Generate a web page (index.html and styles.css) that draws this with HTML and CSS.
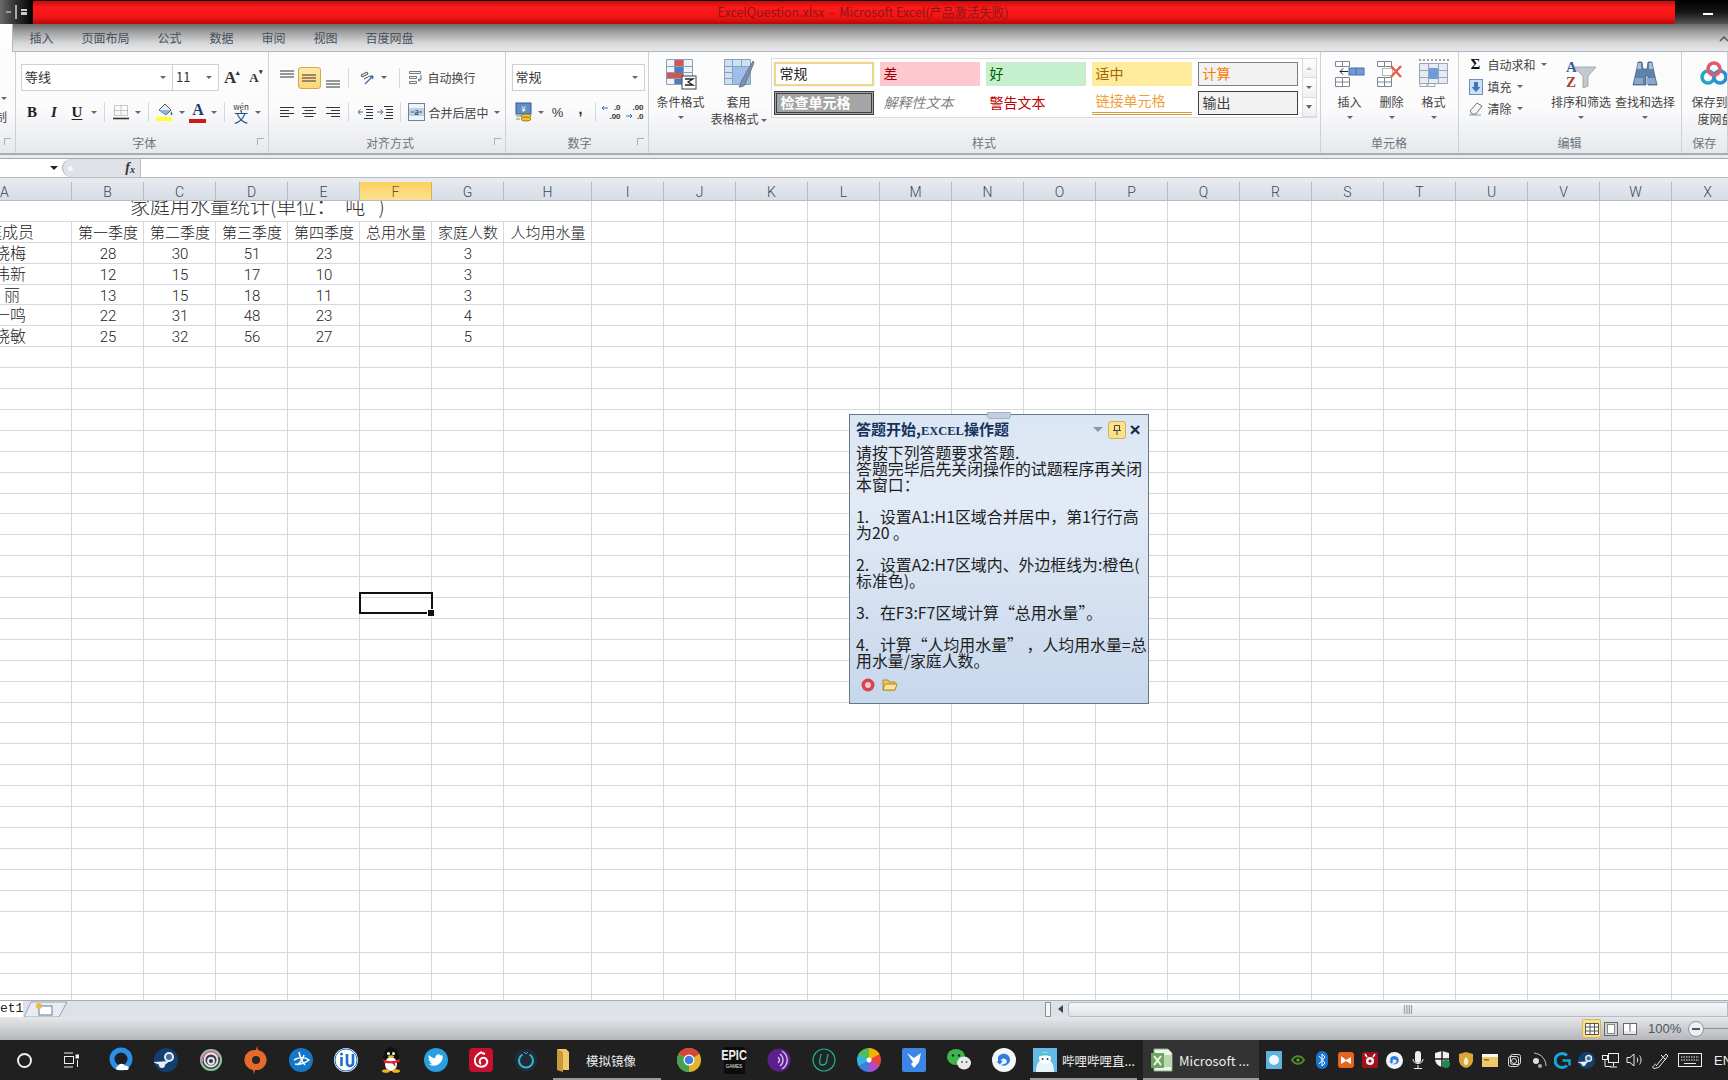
FILE: index.html
```html
<!DOCTYPE html>
<html lang="zh-CN">
<head>
    <meta charset="UTF-8">
    <title>ExcelQuestion.xlsx - Microsoft Excel</title>
    <link rel="stylesheet" href="styles.css">
</head>
<body>
    <svg class="defs">
        <symbol id="lines-left" viewBox="0 0 14 12"><path d="M0 1.500h14M0 4.500h9M0 7.500h14M0 10.500h9" stroke="#333" fill="none"/></symbol>
        <symbol id="lines-center" viewBox="0 0 14 12"><path d="M0 1.500h14M2.500 4.500h9M0 7.500h14M2.500 10.500h9" stroke="#333" fill="none"/></symbol>
        <symbol id="lines-right" viewBox="0 0 14 12"><path d="M0 1.500h14M5 4.500h9M0 7.500h14M5 10.500h9" stroke="#333" fill="none"/></symbol>
        <symbol id="three" viewBox="0 0 14 8"><path d="M0 1h14M0 4h14M0 7h14" stroke="#333" fill="none"/></symbol>
    </svg>

    <header class="titlebar">
        <div class="quick"><span class="quick-dot"></span><span class="quick-bar"></span><span class="quick-more"></span></div>
        <div class="title-red">ExcelQuestion.xlsx&nbsp; -&nbsp; Microsoft Excel(产品激活失败)</div>
        <div class="window-btns"><span class="min-dash"></span></div>
    </header>

    <nav class="tabs">
        <div class="tab-active"></div>
        <span>插入</span><span>页面布局</span><span>公式</span><span>数据</span><span>审阅</span><span>视图</span><span>百度网盘</span>
        <svg class="ribbon-toggle" width="10" height="8" viewBox="0 0 10 8"><path d="M1 6l4-4 4 4" stroke="#555" stroke-width="1.500" fill="none"/></svg>
    </nav>

    <section class="ribbon">
        <div class="group g-clip">
            <div class="body">
                <span class="arr clip-arr"></span>
                <span class="clip-text">制</span>
            </div>
            <div class="label"><i class="launcher"></i></div>
        </div>

        <div class="group g-font">
            <div class="body">
                <div class="row row-top">
                    <div class="combo combo-font">等线<span class="arr"></span></div>
                    <div class="combo combo-size">11<span class="arr"></span></div>
                    <span class="grow-a">A<sup>▴</sup></span>
                    <span class="shrink-a">A<sup>▾</sup></span>
                </div>
                <div class="row row-bottom">
                    <span class="ico w22 bold">B</span>
                    <span class="ico w22 ital">I</span>
                    <span class="ico w24 under">U</span>
                    <span class="ico w10"><span class="arr"></span></span>
                    <span class="sep"></span>
                    <span class="ico w24">
                        <svg width="16" height="16" viewBox="0 0 16 16"><path d="M1.500 1.500h13v10h-13zM8 1.500v10M1.500 6.500h13" stroke="#999" stroke-dasharray="1 1" fill="none"/><path d="M0 14.500h16" stroke="#333" stroke-width="1.600"/></svg>
                    </span>
                    <span class="ico w10"><span class="arr"></span></span>
                    <span class="sep"></span>
                    <span class="ico w24">
                        <svg width="18" height="20" viewBox="0 0 18 20"><path d="M3 8l6-6 6 6-5 5z" fill="#e8eef5" stroke="#555"/><path d="M3 8h11l-4 5z" fill="#8fb4dc"/><path d="M15 9c1.400 2 2 3 1 4s-2-1-1-4z" fill="#3c6fa8"/><rect y="15" width="16" height="4" fill="#ffff33"/></svg>
                    </span>
                    <span class="ico w10"><span class="arr"></span></span>
                    <span class="ico w22 color-a">A<i></i></span>
                    <span class="ico w10"><span class="arr"></span></span>
                    <span class="sep"></span>
                    <span class="ico w24 wen"><small>wén</small>文</span>
                    <span class="ico w10"><span class="arr"></span></span>
                </div>
            </div>
            <div class="label">字体<i class="launcher"></i></div>
        </div>

        <div class="group g-align">
            <div class="body">
                <div class="row row-top row-align">
                    <span class="ico w22 top"><svg width="14" height="8"><use href="#three"/></svg></span>
                    <span class="ico w23 on"><svg width="14" height="8"><use href="#three"/></svg></span>
                    <span class="ico w24 low"><svg width="14" height="8"><use href="#three"/></svg></span>
                    <span class="sep"></span>
                    <span class="ico w24 ml3">
                        <svg width="16" height="16" viewBox="0 0 16 16"><path d="M2 5l6-3 1 2-6 3zM5 9l6-3" stroke="#555" fill="#dfe6ef"/><path d="M6 14L14 6M14 6l-3 .5M14 6l-.5 3" stroke="#3c6fa8" stroke-width="1.300" fill="none"/></svg>
                    </span>
                    <span class="ico w10"><span class="arr"></span></span>
                    <span class="wide-gap"></span>
                    <span class="sep"></span>
                    <span class="ico w20 ml3">
                        <svg width="16" height="16" viewBox="0 0 16 16"><path d="M1.500 1.500h11v2h-11zM1.500 6.500h7v2h-7zM1.500 11.500h7v2h-7z" fill="#f4f6f8" stroke="#777"/><path d="M13 5v5h-3m1.500-1.500L10 10l1.500 1.500" stroke="#3c6fa8" fill="none"/></svg>
                    </span>
                    <span class="tool-text">自动换行</span>
                </div>
                <div class="row row-bottom row-align">
                    <span class="ico w22"><svg width="14" height="12"><use href="#lines-left"/></svg></span>
                    <span class="ico w23"><svg width="14" height="12"><use href="#lines-center"/></svg></span>
                    <span class="ico w24"><svg width="14" height="12"><use href="#lines-right"/></svg></span>
                    <span class="sep"></span>
                    <span class="ico w20 ml3">
                        <svg width="16" height="14" viewBox="0 0 16 14"><path d="M7 1.500h9M9 4.500h7M9 7.500h7M9 10.500h7M7 13.500h9" stroke="#333"/><path d="M1 7h5M1 7l2.500-2.500M1 7l2.500 2.500" stroke="#3c6fa8" fill="none"/></svg>
                    </span>
                    <span class="ico w20">
                        <svg width="16" height="14" viewBox="0 0 16 14"><path d="M7 1.500h9M9 4.500h7M9 7.500h7M9 10.500h7M7 13.500h9" stroke="#333"/><path d="M0 7h6M6 7L3.500 4.500M6 7L3.500 9.500" stroke="#3c6fa8" fill="none"/></svg>
                    </span>
                    <span class="wide-gap2"></span>
                    <span class="sep"></span>
                    <span class="ico w20 ml3">
                        <svg width="17" height="18" viewBox="0 0 17 18"><rect x=".5" y=".5" width="16" height="17" fill="#f0f4f8" stroke="#6f8396"/><rect x="1" y="5" width="15" height="8" fill="#bcd2ea"/><path d="M3 9h3m5 0h3" stroke="#2a5a90"/><text x="8.500" y="12" font-size="8" text-anchor="middle" fill="#123">a</text></svg>
                    </span>
                    <span class="tool-text">合并后居中</span>
                    <span class="arr arr-text"></span>
                </div>
            </div>
            <div class="label">对齐方式<i class="launcher"></i></div>
        </div>

        <div class="group g-num">
            <div class="body">
                <div class="row row-top">
                    <div class="combo combo-num">常规<span class="arr"></span></div>
                </div>
                <div class="row row-bottom">
                    <span class="ico w24">
                        <svg width="18" height="20" viewBox="0 0 18 20"><rect x="1" y="1" width="15" height="11" fill="#5f8fc9" stroke="#2c5a94"/><text x="8.500" y="10" font-size="8" fill="#fff" text-anchor="middle">¥</text><ellipse cx="11" cy="14" rx="5" ry="2" fill="#f0c33c" stroke="#a87b12"/><ellipse cx="11" cy="17" rx="5" ry="2" fill="#f0c33c" stroke="#a87b12"/><path d="M1 14h5M1 17h4" stroke="#6a9a3a"/></svg>
                    </span>
                    <span class="ico w10"><span class="arr"></span></span>
                    <span class="ico w24 pct">%</span>
                    <span class="ico w22 comma">,</span>
                    <span class="sep"></span>
                    <span class="ico w24 dec"><svg width="18" height="16" viewBox="0 0 18 16"><path d="M1 4h6M1 4l2-2M1 4l2 2" stroke="#3c6fa8" fill="none"/></svg><b>.0<br>.00</b></span>
                    <span class="ico w22 dec"><svg width="18" height="16" viewBox="0 0 18 16"><path d="M1 12h6M7 12l-2-2M7 12l-2 2" stroke="#3c6fa8" fill="none"/></svg><b>.00<br>.0</b></span>
                </div>
            </div>
            <div class="label">数字<i class="launcher"></i></div>
        </div>

        <div class="group g-styles">
            <div class="body styles-body">
                <div class="big-btn w58">
                    <svg width="32" height="32" viewBox="0 0 32 32"><path d="M1.500 1.500h26v25h-26zM1.500 8.500h26M1.500 14.500h26M1.500 20.500h26M9.500 1.500v25M18.500 1.500v25" fill="#eef3f9" stroke="#8aa0b8"/><rect x="10" y="2" width="8" height="6" fill="#d9534f"/><rect x="10" y="9" width="8" height="6" fill="#4a7cc0"/><rect x="2" y="15" width="16" height="5" fill="#d9534f"/><rect x="10" y="21" width="8" height="5" fill="#4a7cc0"/><rect x="17" y="18" width="14" height="13" fill="#fff" stroke="#444"/><path d="M20 21h8l-5 3 5 3h-8" fill="none" stroke="#222" stroke-width="1.300"/></svg>
                    <span>条件格式</span>
                    <span class="arr"></span>
                </div>
                <div class="big-btn w58">
                    <svg width="32" height="32" viewBox="0 0 32 32"><path d="M1.500 1.500h26v25h-26zM1.500 8.500h26M1.500 14.500h26M1.500 20.500h26M9.500 1.500v25M18.500 1.500v25" fill="#cfe0f5" stroke="#8aa0b8"/><rect x="10" y="9" width="17" height="17" fill="#9dbdea"/><path d="M30 3L19 22l-3 7c4 0 7-2 7-5l8-19z" fill="#7f8fa5" stroke="#56657a" stroke-width=".7"/></svg>
                    <span>套用</span>
                    <span>表格格式<i class="arr inline-arr"></i></span>
                </div>
                <div class="gallery">
                    <div class="style-grid">
                        <div class="st st-normal">常规</div>
                        <div class="st st-bad">差</div>
                        <div class="st st-good">好</div>
                        <div class="st st-mid">适中</div>
                        <div class="st st-calc">计算</div>
                        <div class="st st-check">检查单元格</div>
                        <div class="st st-note">解释性文本</div>
                        <div class="st st-warn">警告文本</div>
                        <div class="st st-link">链接单元格</div>
                        <div class="st st-out">输出</div>
                    </div>
                    <div class="gallery-scroll">
                        <span><i class="arr arr-up pale"></i></span>
                        <span><i class="arr"></i></span>
                        <span><i class="arr more"></i></span>
                    </div>
                </div>
            </div>
            <div class="label">样式</div>
        </div>

        <div class="group g-cells">
            <div class="body cells-body">
                <div class="big-btn w42">
                    <svg width="32" height="28" viewBox="0 0 32 28"><path d="M1.500 1.500h14v5h-14zM8.500 1.500v5M1.500 17.500h14v9h-14zM8.500 17.500v9M1.500 22h14" fill="#fff" stroke="#7b8794"/><rect x="15" y="8" width="15" height="7" fill="#6f9bd8" stroke="#47709f"/><path d="M22 8v7" stroke="#47709f"/><path d="M6 11.500h8M6 11.500l3-3M6 11.500l3 3" stroke="#222" fill="none"/></svg>
                    <span>插入</span>
                    <span class="arr"></span>
                </div>
                <div class="big-btn w42">
                    <svg width="32" height="28" viewBox="0 0 32 28"><path d="M1.500 1.500h14v5h-14zM8.500 1.500v5M1.500 17.500h14v9h-14zM8.500 17.500v9M1.500 22h14" fill="#fff" stroke="#7b8794"/><path d="M6.500 8.500h10v7h-10z" fill="#fff" stroke="#777" stroke-dasharray="1 1"/><path d="M15 6l10 11M25 6L15 17" stroke="#e0604c" stroke-width="2.400"/></svg>
                    <span>删除</span>
                    <span class="arr"></span>
                </div>
                <div class="big-btn w42">
                    <svg width="32" height="30" viewBox="0 0 32 30"><path d="M1 1h30" stroke="#444" stroke-dasharray="2 2"/><path d="M1.500 4.500h28v20h-28zM10.500 4.500v20M20.500 4.500v20M1.500 11.500h28M1.500 18.500h28" fill="#e5ecf5" stroke="#98a7b8"/><rect x="11" y="9" width="9" height="11" fill="#6f9bd8"/><path d="M2 24.500v3h7v-3M10 24.500v3h7v-3" fill="none" stroke="#98a7b8"/></svg>
                    <span>格式</span>
                    <span class="arr"></span>
                </div>
            </div>
            <div class="label">单元格</div>
        </div>

        <div class="group g-edit">
            <div class="body edit-body">
                <div class="edit-list">
                    <div class="edit-item"><span class="sigma">Σ</span><span>自动求和</span><span class="arr"></span></div>
                    <div class="edit-item">
                        <svg width="14" height="16" viewBox="0 0 14 16"><rect x=".5" y=".5" width="13" height="15" fill="#cddff3" stroke="#6e8eb5"/><path d="M5 3h4v5h2.500L7 13 2.500 8H5z" fill="#3f73bf"/></svg>
                        <span>填充</span><span class="arr"></span>
                    </div>
                    <div class="edit-item">
                        <svg width="14" height="14" viewBox="0 0 14 14"><path d="M1 9l7-8 5 3-6 8H3z" fill="#f4f6f8" stroke="#6b7785"/><path d="M0 13h12" stroke="#8797a8"/></svg>
                        <span>清除</span><span class="arr"></span>
                    </div>
                </div>
                <div class="big-btn w62">
                    <svg width="32" height="30" viewBox="0 0 32 30"><text x="1" y="13" class="az az-a">A</text><text x="1" y="28" class="az az-z">Z</text><path d="M9 8h22l-8 9v10l-5 2V17z" fill="#c3c9cf" stroke="#8a9299" stroke-width=".7"/></svg>
                    <span>排序和筛选</span>
                    <span class="arr"></span>
                </div>
                <div class="big-btn w62">
                    <svg width="30" height="28" viewBox="0 0 30 28"><path d="M8 2h4l1 7h4l1-7h4l2 10 3 13h-9v-9h-2v9H3L6 12z" fill="#5f82ad" stroke="#3a567a" stroke-width=".7"/><path d="M8 3h3v6H7zM19 3h3l1 6h-4z" fill="#a9bfd8"/><path d="M5 18h8v6H4zM17 18h8l1 6h-9z" fill="#8aa7c9"/></svg>
                    <span>查找和选择</span>
                    <span class="arr"></span>
                </div>
            </div>
            <div class="label">编辑</div>
        </div>

        <div class="group g-save">
            <div class="body save-body">
                <div class="big-btn w58">
                    <svg width="30" height="26" viewBox="0 0 30 26"><circle cx="9" cy="16" r="6" fill="none" stroke="#27a3c7" stroke-width="3.500"/><circle cx="21" cy="16" r="6" fill="none" stroke="#2b8fd6" stroke-width="3.500"/><circle cx="15" cy="8" r="6" fill="none" stroke="#e0596f" stroke-width="3.500"/></svg>
                    <span class="save-line">保存到百</span>
                    <span class="save-line">度网盘</span>
                </div>
            </div>
            <div class="label">保存</div>
        </div>
    </section>

    <div class="formula-wrap">
        <div class="formula">
            <div class="name-box"><span class="arr dark"></span></div>
            <div class="fx-cap"><span class="cap-mark"></span><span class="fx">f<sub>x</sub></span></div>
            <div class="fx-input"></div>
        </div>
    </div>

    <div class="col-heads">
        <span class="col-a">A</span><span>B</span><span>C</span><span>D</span><span>E</span><span class="col-on">F</span><span>G</span><span>H</span>
        <span>I</span><span>J</span><span>K</span><span>L</span><span>M</span><span>N</span><span>O</span><span>P</span>
        <span>Q</span><span>R</span><span>S</span><span>T</span><span>U</span><span>V</span><span>W</span><span>X</span>
    </div>

    <main class="sheet">
        <div class="row-title"><span>家庭用水量统计(单位：&nbsp;&nbsp;吨&nbsp;&nbsp;&nbsp;)</span></div>
        <div class="data-row"><span class="name">家庭成员</span><span>第一季度</span><span>第二季度</span><span>第三季度</span><span>第四季度</span><span>总用水量</span><span>家庭人数</span><span>人均用水量</span></div>
        <div class="data-row"><span class="name">李晓梅</span><span>28</span><span>30</span><span>51</span><span>23</span><span></span><span>3</span><span></span></div>
        <div class="data-row"><span class="name">张伟新</span><span>12</span><span>15</span><span>17</span><span>10</span><span></span><span>3</span><span></span></div>
        <div class="data-row"><span class="name">王&nbsp;丽</span><span>13</span><span>15</span><span>18</span><span>11</span><span></span><span>3</span><span></span></div>
        <div class="data-row"><span class="name">刘一鸣</span><span>22</span><span>31</span><span>48</span><span>23</span><span></span><span>4</span><span></span></div>
        <div class="data-row"><span class="name">陈晓敏</span><span>25</span><span>32</span><span>56</span><span>27</span><span></span><span>5</span><span></span></div>
        <div class="active-cell"></div>
    </main>

    <aside class="dialog">
        <div class="dialog-grip"></div>
        <div class="dialog-head">
            <h2>答题开始,<em>EXCEL</em>操作题</h2>
            <span class="arr head-arr"></span>
            <span class="pin"><svg width="10" height="12" viewBox="0 0 10 12"><path d="M2.500 1.500h5v5h-5zM1 6.500h8M5 6.500V11" stroke="#444" fill="none"/></svg></span>
            <span class="close">×</span>
        </div>
        <div class="dialog-text">
            <p>请按下列答题要求答题.<br>答题完毕后先关闭操作的试题程序再关闭<br>本窗口：</p>
            <p>1.&nbsp;&nbsp; 设置A1:H1区域合并居中，第1行行高<br>为20 。</p>
            <p>2.&nbsp;&nbsp; 设置A2:H7区域内、外边框线为:橙色(<br>标准色)。</p>
            <p>3.&nbsp;&nbsp; 在F3:F7区域计算“总用水量”。</p>
            <p>4.&nbsp;&nbsp; 计算“人均用水量”&nbsp;，人均用水量=总<br>用水量/家庭人数。</p>
        </div>
        <div class="dialog-icons">
            <svg width="14" height="14" viewBox="0 0 14 14"><circle cx="7" cy="7" r="6.500" fill="#d9434f"/><circle cx="7" cy="7" r="3" fill="#f6c6ca"/></svg>
            <svg width="16" height="13" viewBox="0 0 16 13"><path d="M1 12V2h5l1 2h6v8z" fill="#f2c65a" stroke="#b58a2a"/><path d="M1 12l2-6h12l-2 6z" fill="#fbe39a" stroke="#b58a2a"/></svg>
        </div>
    </aside>

    <div class="sheet-tabs">
        <span class="sheet-name">et1</span>
        <span class="new-sheet">
            <svg width="44" height="16" viewBox="0 0 44 16"><path d="M0 16L7 1h36l-8 15z" fill="#e8ecf2" stroke="#9aa3ae"/><rect x="15" y="5" width="13" height="9" fill="#fff" stroke="#5a7a9a"/><circle cx="15" cy="5" r="3" fill="#e9b949"/></svg>
        </span>
        <span class="split"></span>
        <span class="scroll-left"></span>
        <div class="scroll-thumb"><span>||||</span></div>
    </div>

    <div class="status">
        <span class="view view-on">
            <svg width="14" height="12" viewBox="0 0 14 12"><path d="M.5.500h13v11H.500zM.5 4h13M.5 8h13M5 .5v11M9.500.5v11" stroke="#555" fill="#fff"/></svg>
        </span>
        <span class="view">
            <svg width="14" height="14" viewBox="0 0 14 14"><rect x=".5" y=".5" width="13" height="13" fill="#cfd3d8" stroke="#666"/><rect x="3.500" y="2.500" width="7" height="9" fill="#fff" stroke="#888"/></svg>
        </span>
        <span class="view">
            <svg width="14" height="12" viewBox="0 0 14 12"><rect x=".5" y=".5" width="13" height="11" fill="#e6e8eb" stroke="#666"/><rect x="1" y="1" width="5.500" height="7" fill="#fff"/><rect x="7.500" y="1" width="5.500" height="7" fill="#fff"/><path d="M7 .5v8" stroke="#666"/></svg>
        </span>
        <span class="zoom-text">100%</span>
        <span class="zoom-minus"><i></i></span>
        <span class="zoom-track"></span>
    </div>

    <footer class="taskbar">
        <span class="slot w48"><i class="search-ring"></i></span>
        <span class="slot w46">
            <svg width="16" height="16" viewBox="0 0 16 16" fill="none" stroke="#eee"><path d="M1 1h9M1 15h9"/><rect x="1.500" y="4.500" width="9" height="7"/><rect x="13" y="3" width="2.500" height="3" fill="#eee"/><path d="M14.500 8v7"/></svg>
        </span>
        <span class="slot-run">
            <span class="slot">
                <svg width="24" height="26" viewBox="0 0 24 26"><circle cx="12" cy="12" r="9" fill="#1c1f24" stroke="#2a8fe8" stroke-width="5"/><path d="M9 23c-2 0-3-3 0-4 1-3 6-3 7 0 4-1 5 4 2 4z" fill="#fff"/></svg>
            </span>
            <span class="slot">
                <svg width="24" height="24" viewBox="0 0 24 24"><circle cx="12" cy="12" r="12" fill="#123f6e"/><path d="M0 14l9 4 6-5" fill="#e8eef5" stroke="#e8eef5"/><circle cx="15" cy="9" r="5" fill="#e8eef5"/><circle cx="15" cy="9" r="3" fill="#3a6f9e"/><circle cx="8" cy="17" r="3" fill="#e8eef5"/></svg>
            </span>
            <span class="slot">
                <svg width="24" height="24" viewBox="0 0 24 24" fill="none"><circle cx="12" cy="12" r="11" fill="#3a3a44"/><circle cx="12" cy="12" r="10" stroke="#8cc9a0" stroke-width="2"/><path d="M3 14a9 9 0 0 1 17-5" stroke="#e06bb0" stroke-width="2"/><circle cx="12" cy="12" r="6.500" stroke="#e8e8f0" stroke-width="1.800"/><circle cx="12" cy="13" r="3" stroke="#e8e8f0" stroke-width="1.800"/></svg>
            </span>
            <span class="slot">
                <svg width="24" height="28" viewBox="0 0 24 28"><path d="M13 0l1 4a10 10 0 0 1-3 20l-1 4-1-4a10 10 0 0 1 3-20z" fill="#e56a2c"/><circle cx="12" cy="14" r="4" fill="#26262a"/></svg>
            </span>
            <span class="slot">
                <svg width="24" height="24" viewBox="0 0 24 24"><circle cx="12" cy="12" r="12" fill="#1676c8"/><path d="M10 4c1 5 3 10 6 13M5 12c5-3 11-3 15 0-4 3-9 5-14 4M15 7c-1 4-4 8-7 10" stroke="#fff" stroke-width="1.500" fill="none"/></svg>
            </span>
            <span class="slot">
                <svg width="24" height="24" viewBox="0 0 24 24"><circle cx="12" cy="12" r="12" fill="#fff"/><circle cx="12" cy="12" r="11" fill="none" stroke="#1f6fd0" stroke-width="1"/><path d="M7.500 9v9M13 6v9a3 3 0 0 0 6 0V6" fill="none" stroke="#1f6fd0" stroke-width="2.600"/><circle cx="7.500" cy="6" r="1.500" fill="#1f6fd0"/></svg>
            </span>
            <span class="slot">
                <svg width="20" height="26" viewBox="0 0 20 26"><ellipse cx="10" cy="11" rx="8" ry="11" fill="#111"/><ellipse cx="10" cy="17" rx="6" ry="7" fill="#fff"/><circle cx="7.500" cy="6.500" r="1.500" fill="#fff"/><circle cx="12.500" cy="6.500" r="1.500" fill="#fff"/><ellipse cx="10" cy="9.500" rx="3" ry="1.300" fill="#f5b21a"/><path d="M2 12c5 3 11 3 16 0l1 3-5 1 .5 4-3-3.500L3 16z" fill="#d8262a"/><ellipse cx="5" cy="24" rx="4" ry="1.800" fill="#f5b21a"/><ellipse cx="15" cy="24" rx="4" ry="1.800" fill="#f5b21a"/></svg>
            </span>
            <span class="slot">
                <svg width="24" height="24" viewBox="0 0 24 24"><circle cx="12" cy="12" r="12" fill="#2a9fe2"/><path d="M19 7.800c-.6.300-1.200.4-1.800.5.600-.4 1.100-1 1.400-1.700-.6.400-1.300.6-2 .8a3.100 3.100 0 0 0-5.300 2.800c-2.600-.1-4.900-1.400-6.400-3.300-.8 1.400-.4 3.200 1 4.100-.5 0-1-.2-1.400-.4 0 1.500 1.100 2.800 2.500 3.100-.5.100-.9.100-1.400 0 .4 1.200 1.500 2.100 2.900 2.200A6.300 6.300 0 0 1 5 16.200a8.900 8.900 0 0 0 13.700-7.900c.1-.1.300-.3.300-.5z" fill="#fff"/></svg>
            </span>
            <span class="slot">
                <svg width="24" height="24" viewBox="0 0 24 24"><rect width="24" height="24" rx="4" fill="#c8102e"/><path d="M13 4c-5 2-8 6-7 10 1 5 8 6 11 3 3-4 0-8-4-7-3 1-3 5-1 6M13 5l3 1" stroke="#fff" stroke-width="2" fill="none"/></svg>
            </span>
            <span class="slot">
                <svg width="24" height="24" viewBox="0 0 24 24" fill="none"><circle cx="12" cy="12" r="11.500" fill="#1f2c38"/><path d="M8.500 6.500a7 7 0 1 0 7 0" stroke="#38b6c6" stroke-width="2"/><path d="M10 4l2 2 2-2" stroke="#38b6c6"/></svg>
            </span>
        </span>
        <span class="run-item run-folder">
            <svg width="14" height="24" viewBox="0 0 14 24"><path d="M1 1h9l3 3v18H1z" fill="#f0c869"/><path d="M1 22V1l6 3v20z" fill="#c99a3a"/></svg>
            <span class="run-label">模拟镜像</span>
        </span>
        <span class="slot-run slot-run2">
            <span class="slot">
                <svg width="24" height="24" viewBox="0 0 24 24"><circle cx="12" cy="12" r="12" fill="#e0b42c"/><path d="M12 12L1.600 6A12 12 0 0 1 22.400 6z" fill="#d6453a"/><path d="M12 12L1.600 6A12 12 0 0 0 12 24z" fill="#46a04f"/><circle cx="12" cy="12" r="5.500" fill="#fff"/><circle cx="12" cy="12" r="4.300" fill="#3f7fe0"/></svg>
            </span>
            <span class="slot epic">
                <span class="epic-big">EPIC</span>
                <span class="epic-small">GAMES</span>
            </span>
            <span class="slot">
                <svg width="24" height="24" viewBox="0 0 24 24" fill="none"><circle cx="12" cy="12" r="11.500" fill="#5a1f8a"/><path d="M13 6c4 3 4 9 0 12M15 3c7 5 7 13 0 18M11 9c2 2 2 4 0 6" stroke="#d9b5f5" stroke-width="1.500"/></svg>
            </span>
            <span class="slot">
                <svg width="24" height="24" viewBox="0 0 24 24" fill="none"><circle cx="12" cy="12" r="11" fill="#1d2624" stroke="#2aa58c" stroke-width="1.200"/><path d="M9 6l-1.500 8c0 4 6 4 7 0L16 6" stroke="#2aa58c" stroke-width="1.300"/></svg>
            </span>
            <span class="slot"><i class="pinwheel"></i></span>
            <span class="slot">
                <svg width="24" height="24" viewBox="0 0 24 24"><rect width="24" height="24" rx="2" fill="#3d86e8"/><path d="M5 5l7 5 7-5-2 9-5 6-3-4 2-2z" fill="#fff"/></svg>
            </span>
            <span class="slot">
                <svg width="24" height="22" viewBox="0 0 24 22"><ellipse cx="9" cy="8" rx="9" ry="8" fill="#3cb54a"/><ellipse cx="17" cy="14" rx="7" ry="6.500" fill="#e9e9e9"/><circle cx="6" cy="6.500" r="1.200" fill="#124"/><circle cx="12" cy="6.500" r="1.200" fill="#124"/><circle cx="15" cy="13" r=".9" fill="#555"/><circle cx="19.500" cy="13" r=".9" fill="#555"/></svg>
            </span>
            <span class="slot">
                <svg width="24" height="24" viewBox="0 0 24 24"><circle cx="12" cy="12" r="12" fill="#f4f6fa"/><path d="M6 9c3-5 11-4 12 2 .6 5-5 8-9 6l3-1c3 0 4-4 1-5-2-1-4 0-4 2l2-.5-3 4-4-3 2 .2z" fill="#2e7de0"/></svg>
            </span>
        </span>
        <span class="run-item run-bili">
            <svg width="24" height="24" viewBox="0 0 24 24"><rect width="24" height="24" fill="#66b8e8"/><path d="M3 24c0-8 3-13 9-13s9 5 9 13z" fill="#e8f4fb"/><circle cx="12" cy="10" r="6" fill="#fff"/><path d="M5 9c0-6 14-6 14 0-3-2-11-2-14 0z" fill="#4fc3c9"/><circle cx="9.500" cy="11" r="1" fill="#246"/><circle cx="14.500" cy="11" r="1" fill="#246"/></svg>
            <span class="run-label">哔哩哔哩直...</span>
        </span>
        <span class="run-item run-excel">
            <svg width="22" height="24" viewBox="0 0 22 24"><path d="M3 1h14l4 4v18H3z" fill="#eef5ea" stroke="#8fae86"/><rect x="11" y="7" width="9" height="12" fill="#b9d8ac"/><rect y="5" width="13" height="15" fill="#6ea55f"/><path d="M3 8l7 9M10 8l-7 9" stroke="#f4f8f0" stroke-width="2"/></svg>
            <span class="run-label">Microsoft ...</span>
        </span>
        <span class="tray">
            <span class="tray-slot"><svg width="16" height="18" viewBox="0 0 16 18"><rect width="16" height="18" fill="#5fb3df"/><circle cx="8" cy="9" r="5" fill="#eef7fc"/></svg></span>
            <span class="tray-slot"><svg width="14" height="10" viewBox="0 0 14 10"><path d="M1 5c3-5 9-5 12 0-3 5-9 5-12 0z" fill="none" stroke="#4c8a2a" stroke-width="2"/><circle cx="7" cy="5" r="1.500" fill="#76b900"/></svg></span>
            <span class="tray-slot"><svg width="12" height="18" viewBox="0 0 12 18"><rect width="12" height="18" rx="6" fill="#1976d2"/><path d="M3 5l6 7-3 3V3l3 3-6 7" stroke="#fff" fill="none"/></svg></span>
            <span class="tray-slot"><svg width="16" height="16" viewBox="0 0 16 16"><rect width="16" height="16" rx="3" fill="#e8641e"/><path d="M3 4l5 4 5-3v7l-5-3-5 3z" fill="#fff"/></svg></span>
            <span class="tray-slot"><svg width="16" height="16" viewBox="0 0 16 16"><rect width="16" height="16" rx="2" fill="#a3121c"/><circle cx="8" cy="9" r="4" fill="#f2f2f2"/><circle cx="8" cy="9" r="1.600" fill="#a3121c"/><path d="M3 2l2 3M13 2l-2 3" stroke="#fff" stroke-width="1.500"/></svg></span>
            <span class="tray-slot"><svg width="17" height="17" viewBox="0 0 24 24"><circle cx="12" cy="12" r="12" fill="#f4f6fa"/><path d="M6 9c3-5 11-4 12 2 .6 5-5 8-9 6l3-1c3 0 4-4 1-5-2-1-4 0-4 2l2-.5-3 4-4-3 2 .2z" fill="#2e7de0"/></svg></span>
            <span class="tray-slot"><svg width="12" height="18" viewBox="0 0 12 18"><rect x="3" y="0" width="6" height="12" rx="3" fill="#eee"/><path d="M1 8c0 6 10 6 10 0M6 14v3M2 17.500h8" stroke="#eee" fill="none"/></svg></span>
            <span class="tray-slot"><svg width="16" height="18" viewBox="0 0 16 18"><path d="M8 0l7 2v6c0 4-3 7-7 8-4-1-7-4-7-8V2z" fill="#f2f2f2"/><path d="M1 8h14M8 0v16" stroke="#222" stroke-width="1.500"/><circle cx="12" cy="13" r="4" fill="#1e8a4b"/></svg></span>
            <span class="tray-slot"><svg width="14" height="16" viewBox="0 0 14 16"><path d="M7 0l7 2v6c0 4-3 7-7 8-4-1-7-4-7-8V2z" fill="#d9a536"/><path d="M7 5c3 3 3 8 0 8s-3-5 0-8z" fill="#f5ecd0"/></svg></span>
            <span class="tray-slot"><svg width="16" height="13" viewBox="0 0 16 13"><rect width="16" height="13" fill="#f0c869"/><rect width="16" height="3" fill="#f5f5f5"/><rect x="2" y="5" width="5" height="1.500" fill="#8a6a20"/></svg></span>
            <span class="tray-slot"><svg width="15" height="15" viewBox="0 0 15 15" fill="none" stroke="#ddd"><rect x="3.500" y="1.500" width="10" height="10" rx="2"/><rect x="1.500" y="3.500" width="10" height="10" rx="2"/><circle cx="7" cy="8" r="2.500"/></svg></span>
            <span class="tray-slot"><svg width="17" height="17" viewBox="0 0 17 17" fill="none"><path d="M4 1c8 1 12 7 12 13" stroke="#ccc"/><circle cx="6" cy="9" r="3" fill="#ddd"/><circle cx="10" cy="14" r="2" fill="#aaa"/></svg></span>
            <span class="tray-slot"><svg width="17" height="17" viewBox="0 0 17 17" fill="none"><path d="M13 3.500A7 7 0 1 0 13 13.500" stroke="#18a4dc" stroke-width="3"/><path d="M8.500 8.500h7v5" stroke="#18a4dc" stroke-width="2.400"/></svg></span>
            <span class="tray-slot"><svg width="17" height="17" viewBox="0 0 24 24"><circle cx="12" cy="12" r="12" fill="#123f6e"/><path d="M0 14l9 4 6-5" fill="#e8eef5" stroke="#e8eef5"/><circle cx="15" cy="9" r="5" fill="#e8eef5"/><circle cx="15" cy="9" r="3" fill="#3a6f9e"/><circle cx="8" cy="17" r="3" fill="#e8eef5"/></svg></span>
            <span class="tray-slot"><svg width="17" height="15" viewBox="0 0 17 15" fill="none" stroke="#eee"><rect x="6.500" y=".5" width="10" height="9"/><rect x=".5" y="2.500" width="5" height="4"/><path d="M3 6.500v7h6M11.500 9.500v4M8 14h7"/></svg></span>
            <span class="tray-slot"><svg width="17" height="14" viewBox="0 0 17 14" fill="none" stroke="#eee"><path d="M1 4.500h3L8 1v12L4 9.500H1z"/><path d="M11 4.500c1 1.500 1 3.500 0 5M13.500 2.500c2 2.500 2 6.500 0 9"/></svg></span>
            <span class="tray-wide w22">
                <svg width="18" height="18" viewBox="0 0 18 18" fill="none" stroke="#eee"><path d="M4 15L14 3l2 2-9 11c-2 1-5 2-6 1s1-3 3-4"/><path d="M9 4l5 5"/></svg>
            </span>
            <span class="tray-wide w36">
                <svg width="24" height="14" viewBox="0 0 24 14" fill="none" stroke="#eee"><rect x=".5" y=".5" width="23" height="13"/><path d="M3 4h18M3 7h18" stroke-dasharray="1.500 1"/><path d="M6 10.500h12"/></svg>
            </span>
            <span class="en">EN</span>
        </span>
    </footer>
</body>
</html>
```

FILE: styles.css
```css
* {
    box-sizing: border-box;
}
html, body {
    margin: 0;
    height: 100%;
}
body {
    width: 1728px;
    height: 1080px;
    overflow: hidden;
    position: relative;
    display: flex;
    flex-direction: column;
    font-family: "Noto Sans CJK SC", "Liberation Sans", sans-serif;
    font-size: 12px;
    color: #444;
    background-color: #fff;
}
.defs {
    display: none;
}
.arr {
    display: inline-block;
    width: 0;
    height: 0;
    border-left: 3px solid transparent;
    border-right: 3px solid transparent;
    border-top: 3px solid #666;
    flex: none;
}
.arr.dark {
    border-top-color: #222;
    border-left-width: 4px;
    border-right-width: 4px;
    border-top-width: 4px;
}
.arr-up {
    border-top: none;
    border-bottom: 3px solid #666;
}
.pale {
    opacity: 0.4;
}

/* title bar */
.titlebar {
    height: 24px;
    flex: none;
    display: flex;
    background: linear-gradient(#000 0, #151515 50%, #555 100%);
}
.quick {
    width: 33px;
    display: flex;
    align-items: center;
    gap: 4px;
    padding-left: 6px;
    background: linear-gradient(90deg, #6b6b6b 0, #333 45%, #000 100%);
}
.quick-dot {
    width: 5px;
    height: 2px;
    background-color: #999;
}
.quick-bar {
    width: 2px;
    height: 14px;
    background-color: #aaa;
}
.quick-more {
    width: 6px;
    height: 6px;
    border-top: 2px solid #ccc;
    border-bottom: 3px solid #ccc;
}
.title-red {
    flex: 1;
    margin-top: 1px;
    border-radius: 0 0 2px 2px;
    background: linear-gradient(#c90c0c 0, #ff1a1a 30%, #f21414 70%, #b80808 100%);
    color: #8e1616;
    font-size: 12.600px;
    line-height: 22px;
    text-align: center;
    padding-left: 18px;
    letter-spacing: -0.1px;
}
.window-btns {
    width: 53px;
    position: relative;
}
.min-dash {
    position: absolute;
    left: 28px;
    top: 13px;
    width: 10px;
    height: 2px;
    background-color: #fff;
}

/* tabs */
.tabs {
    height: 28px;
    flex: none;
    display: flex;
    align-items: center;
    gap: 28px;
    font-size: 12px;
    color: #46505c;
    background: linear-gradient(#6a6a6a 0, #a0a0a0 30%, #d5d6d8 70%, #e6e7ea 100%);
    border-bottom: 1px solid #b4b8bd;
    position: relative;
}
.tab-active {
    width: 13px;
    height: 28px;
    margin-right: -11.500px;
    background-color: #fdfdfd;
    border-right: 1px solid #b4b8bd;
    align-self: flex-start;
}
.ribbon-toggle {
    position: absolute;
    left: 1719px;
    top: 11px;
}

/* ribbon */
.ribbon {
    height: 103px;
    flex: none;
    display: flex;
    background: linear-gradient(#fcfcfd 0, #fbfbfc 55%, #e6e8eb 100%);
    border-bottom: 2px solid #a9adb2;
}
.group {
    display: flex;
    flex-direction: column;
    flex: none;
    border-right: 1px solid #cdd0d4;
    position: relative;
}
.body {
    flex: 1;
    min-height: 0;
}
.label {
    height: 22px;
    flex: none;
    text-align: center;
    line-height: 23px;
    color: #6c7480;
    position: relative;
    font-size: 12px;
}
.launcher {
    position: absolute;
    right: 4px;
    top: 7px;
    width: 7px;
    height: 7px;
    border-left: 1px solid #aab0b8;
    border-top: 1px solid #aab0b8;
    background-color: #eceef1;
}
.g-clip {
    width: 15.500px;
    overflow: hidden;
}
.g-clip .body {
    position: relative;
}
.clip-arr {
    position: absolute;
    left: 1px;
    top: 45px;
}
.clip-text {
    position: absolute;
    left: -5px;
    top: 56px;
}
.g-font {
    width: 253px;
    padding-left: 5.500px;
}
.g-font .sep {
    margin: 0 4.500px;
}
.g-align {
    width: 237px;
    padding-left: 7px;
}
.g-num {
    width: 143px;
    padding-left: 6px;
}
.g-styles {
    width: 672px;
}
.g-cells {
    width: 138px;
}
.g-edit {
    width: 223px;
}
.g-save {
    flex: 1;
    overflow: hidden;
}
.row {
    display: flex;
    align-items: center;
}
.row-top {
    margin-top: 12px;
    height: 27px;
}
.row-bottom {
    margin-top: 9px;
    height: 24px;
}
.combo {
    display: flex;
    align-items: center;
    justify-content: space-between;
    height: 27px;
    padding: 0 6px 3px 3px;
    border: 1px solid #cdd1d6;
    background-color: #fff;
    color: #333;
    font-size: 13px;
}
.combo .arr {
    margin-top: 3px;
}
.combo-font {
    width: 152px;
}
.combo-size {
    width: 47px;
    margin-left: -1px;
}
.combo-num {
    width: 133px;
}
.grow-a, .shrink-a {
    font-family: "Liberation Serif", serif;
    font-weight: bold;
    color: #333;
    line-height: 1;
}
.grow-a {
    font-size: 17px;
    margin-left: 5px;
}
.shrink-a {
    font-size: 13px;
    margin-left: 9px;
}
.grow-a sup, .shrink-a sup {
    font-size: 7px;
    vertical-align: 8px;
    line-height: 0;
}
.ico {
    display: flex;
    align-items: center;
    justify-content: center;
    height: 22px;
    flex: none;
    position: relative;
}
.w10 { width: 10px; }
.w20 { width: 20px; }
.w22 { width: 22px; }
.w23 { width: 23px; }
.w24 { width: 24px; }
.w36 { width: 36px; }
.w42 { width: 42px; }
.w46 { width: 46px; }
.w48 { width: 48px; }
.w58 { width: 58px; }
.w62 { width: 62px; }
.ml3 {
    margin-left: 3px;
}
.sep {
    width: 1px;
    height: 20px;
    flex: none;
    background-color: #d5d8dc;
    margin: 0 3px;
}
.bold, .ital, .under {
    font-family: "Liberation Serif", serif;
    font-size: 15px;
    font-weight: bold;
    color: #222;
}
.ital {
    font-style: italic;
}
.under {
    text-decoration: underline;
    text-underline-offset: 2px;
}
.color-a {
    font-family: "Liberation Serif", serif;
    font-size: 16px;
    font-weight: bold;
    color: #1e3b70;
    padding-bottom: 5px;
}
.color-a i {
    position: absolute;
    left: 2px;
    right: 3px;
    bottom: 0;
    height: 4px;
    background-color: #d01818;
}
.wen {
    flex-direction: column;
    color: #1e4f87;
    font-size: 14px;
    line-height: 11px;
}
.wen small {
    font-size: 8px;
    line-height: 8px;
    color: #333;
}
.row-align .top {
    align-items: flex-start;
    padding-top: 3px;
}
.row-align .low {
    align-items: flex-end;
    padding-bottom: 1px;
}
.row-align .on {
    background: linear-gradient(#ffe9a8, #fdd67a);
    border: 1px solid #d4a94a;
    border-radius: 3px;
}
.wide-gap {
    width: 7px;
}
.wide-gap2 {
    width: 2px;
}
.tool-text {
    margin-left: 2px;
    color: #444;
    white-space: nowrap;
}
.arr-text {
    margin-left: 5px;
}
.pct {
    font-family: "Liberation Sans", sans-serif;
    font-size: 13px;
    color: #333;
}
.comma {
    font-family: "Liberation Sans", sans-serif;
    font-size: 14px;
    font-weight: bold;
    color: #222;
    padding-bottom: 6px;
}
.dec svg {
    position: absolute;
    left: 2px;
    top: 3px;
}
.dec b {
    margin-left: 9px;
    font-family: "Liberation Sans", sans-serif;
    font-size: 8px;
    line-height: 9px;
    color: #333;
    text-align: right;
}

/* big buttons and style gallery */
.styles-body, .cells-body, .edit-body, .save-body {
    display: flex;
}
.styles-body {
    padding: 6px 0 0 3px;
}
.cells-body {
    padding: 6px 0 0 8px;
}
.edit-body {
    padding-left: 10px;
}
.big-btn {
    display: flex;
    flex-direction: column;
    align-items: center;
    flex: none;
    line-height: 17px;
    color: #444;
    white-space: nowrap;
}
.big-btn svg {
    height: 32px;
    margin-bottom: 3px;
}
.big-btn .arr {
    margin-top: 6px;
}
.big-btn .inline-arr {
    margin: 0 0 2px 2px;
}
.gallery {
    display: flex;
    margin: 0 0 0 3px;
    width: 546px;
    height: 60px;
    border: 1px solid #d8dbdf;
    background-color: #fff;
}
.style-grid {
    flex: 1;
    display: grid;
    grid-template-columns: repeat(5, 100px);
    grid-template-rows: 24px 24px;
    column-gap: 6px;
    row-gap: 5px;
    padding: 3px 0 0 2px;
}
.st {
    display: flex;
    align-items: center;
    padding: 0 0 3px 4px;
    font-size: 14px;
    color: #222;
}
.st-normal {
    background-color: #fff;
    border: 2px solid #f0d68a;
    border-radius: 2px;
    box-shadow: 0 0 1px #b8963e;
}
.st-bad {
    background-color: #ffc7ce;
    color: #9c0006;
}
.st-good {
    background-color: #c6efce;
    color: #006100;
}
.st-mid {
    background-color: #ffeb9c;
    color: #9c6500;
}
.st-calc {
    background-color: #f2f2f2;
    border: 1px solid #7f7f7f;
    color: #fa7d00;
}
.st-check {
    background-color: #a5a5a5;
    border: 3px double #3f3f3f;
    color: #fff;
    font-weight: 700;
    padding-bottom: 2px;
}
.st-note {
    font-style: italic;
    color: #7f7f7f;
}
.st-warn {
    color: #c00000;
}
.st-link {
    color: #f0a040;
    border-bottom: 3px double #d89a3a;
}
.st-out {
    background-color: #f2f2f2;
    border: 1px solid #3f3f3f;
    color: #3f3f3f;
}
.gallery-scroll {
    width: 14px;
    display: flex;
    flex-direction: column;
    flex: none;
}
.gallery-scroll span {
    flex: 1;
    display: flex;
    align-items: center;
    justify-content: center;
    border-left: 1px solid #d8dbdf;
    border-bottom: 1px solid #d8dbdf;
    background: linear-gradient(#fff, #eef0f3);
}
.gallery-scroll .more {
    border-top-width: 4px;
    box-shadow: 0 -3px 0 -1px #fff;
}
.edit-list {
    display: flex;
    flex-direction: column;
    width: 81px;
    padding-top: 1.500px;
}
.edit-item {
    display: flex;
    align-items: center;
    height: 22px;
    gap: 5px;
    white-space: nowrap;
    color: #444;
}
.edit-item svg {
    flex: none;
}
.sigma {
    width: 14px;
    font-family: "Liberation Serif", serif;
    font-size: 15px;
    font-weight: bold;
    color: #111;
    text-align: center;
}
.edit-body .big-btn {
    margin-top: 6px;
    margin-left: -1px;
    width: 65px;
}
.az {
    font-family: "Liberation Serif", serif;
    font-size: 15px;
    font-weight: bold;
}
.az-a {
    fill: #2f5fa5;
}
.az-z {
    fill: #a8402c;
}
.save-body {
    padding: 6px 0 0 3px;
}
.save-line {
    margin-left: 4px;
}

/* formula bar */
.formula-wrap {
    height: 27px;
    flex: none;
    padding: 3px 0 4px;
    background-color: #e9eaed;
}
.formula {
    height: 20px;
    display: flex;
    border-top: 1px solid #a6aab0;
    border-bottom: 1px solid #b8bcc2;
    background-color: #fff;
}
.name-box {
    width: 62px;
    display: flex;
    align-items: center;
    justify-content: flex-end;
    padding-right: 4px;
}
.fx-cap {
    width: 79px;
    display: flex;
    align-items: center;
    justify-content: space-between;
    padding: 0 5px 0 5px;
    background-color: #dfe3e9;
    border-right: 1px solid #b8bcc2;
    border-radius: 10px 0 0 10px;
    border-left: 1px solid #a9aeb5;
}
.cap-mark {
    width: 5px;
    height: 5px;
    border-radius: 50%;
    background-color: #f4f5f7;
}
.fx {
    font-family: "Liberation Serif", serif;
    font-style: italic;
    font-weight: bold;
    font-size: 14px;
    line-height: 16px;
    color: #333;
}
.fx sub {
    font-size: 10px;
    vertical-align: -1px;
    line-height: 0;
}
.fx-input {
    flex: 1;
}

/* sheet */
.col-heads {
    height: 19px;
    flex: none;
    display: grid;
    grid-template-columns: repeat(7, 72px) 88px repeat(16, 72px);
    background: linear-gradient(#e4e8ef, #d8dde6);
    border-bottom: 1px solid #b6bcc6;
    font-family: Roboto, "Liberation Sans", sans-serif;
    font-weight: 300;
    font-size: 14px;
    color: #3c4856;
    overflow: hidden;
}
.col-heads span {
    text-align: center;
    line-height: 21px;
    border-right: 1px solid #b6bcc6;
}
.col-heads .col-a {
    text-align: left;
}
.col-heads .col-on {
    background: linear-gradient(#fdcf5e, #fde59a);
    color: #6a5a2a;
    border-right-color: #e0b040;
    border-bottom: 1px solid #e0a030;
}
.sheet {
    flex: 1;
    min-height: 0;
    position: relative;
    background-color: #fff;
    background-image:
        linear-gradient(90deg, #d6d8db 1px, transparent 1px),
        repeating-linear-gradient(90deg, transparent 0, transparent 71px, #d6d8db 71px, #d6d8db 72px),
        repeating-linear-gradient(90deg, transparent 0, transparent 71px, #d6d8db 71px, #d6d8db 72px),
        repeating-linear-gradient(180deg, transparent 0, transparent 19.900px, #d6d8db 19.900px, #d6d8db 20.900px);
    background-size: 1px 100%, 504px 100%, 100% 100%, 100% 100%;
    background-position: 591px 0, 0 0, 592px 0, 0 0;
    background-repeat: no-repeat, no-repeat, no-repeat, repeat;
}
.row-title {
    height: 20.900px;
    width: 592px;
    background-color: #fff;
    border-right: 1px solid #d6d8db;
    border-bottom: 1px solid #d6d8db;
    overflow: hidden;
    padding-left: 130px;
    font-size: 20px;
    font-weight: 300;
    line-height: 9px;
    color: #333;
    white-space: nowrap;
}
.data-row {
    height: 20.900px;
    display: grid;
    grid-template-columns: repeat(7, 72px) 88px;
    width: 592px;
    font-family: Roboto, "Noto Sans CJK SC", sans-serif;
    font-weight: 300;
    font-size: 15px;
    color: #222;
    text-align: center;
    line-height: 22.900px;
    white-space: nowrap;
}
.data-row .name {
    margin-left: -68px;
    font-size: 16px;
}
.active-cell {
    position: absolute;
    left: 358.500px;
    top: 391px;
    width: 74px;
    height: 22px;
    border: 2.500px solid #111;
}
.active-cell::after {
    content: "";
    position: absolute;
    right: -4.500px;
    bottom: -4.500px;
    width: 6px;
    height: 6px;
    background-color: #111;
    border: 1px solid #fff;
}

/* floating dialog */
.dialog {
    position: absolute;
    left: 849px;
    top: 414px;
    width: 300px;
    height: 290px;
    border: 1px solid #687786;
    background: linear-gradient(#dbe6f4, #e2eaf6 30%, #c7d7ec);
    padding: 0 6px;
    color: #1d1d1d;
    font-size: 15.900px;
    line-height: 16px;
}
.dialog-grip {
    position: absolute;
    left: 137px;
    top: -3px;
    width: 24px;
    height: 7px;
    border-radius: 0 0 3px 3px;
    background-color: #c2cfe0;
    border: 1px solid #a3b0c2;
}
.dialog-head {
    display: flex;
    align-items: center;
    height: 28px;
    margin-right: -2px;
    padding-top: 1px;
    color: #14325c;
}
.dialog-head h2 {
    flex: 1;
    margin: 0;
    font-size: 15px;
    font-weight: 700;
    white-space: nowrap;
}
.dialog-head em {
    font-family: "Liberation Serif", serif;
    font-style: normal;
    font-size: 12.500px;
}
.head-arr {
    border-left-width: 5px;
    border-right-width: 5px;
    border-top-width: 5px;
    border-top-color: #8b97a5;
}
.pin {
    display: flex;
    align-items: center;
    justify-content: center;
    width: 18px;
    height: 18px;
    margin-left: 5px;
    background-color: #fce08b;
    border: 1px solid #d9b04e;
    border-radius: 3px;
}
.close {
    width: 18px;
    text-align: center;
    font-family: "Liberation Sans", sans-serif;
    font-size: 19px;
    font-weight: bold;
    color: #1d2b3d;
}
.dialog-text p {
    margin: 0 0 16px;
    white-space: nowrap;
}
.dialog-text {
    margin-top: 1.500px;
}
.dialog-icons {
    display: flex;
    align-items: center;
    gap: 7px;
    margin-top: -15px;
    height: 30px;
    padding-left: 5px;
}

/* bottom bars */
.sheet-tabs {
    height: 16px;
    flex: none;
    display: flex;
    align-items: center;
    background-color: #dde1e8;
    border-top: 1px solid #a9adb3;
    border-bottom: 1px solid #a9adb3;
    box-sizing: content-box;
    margin-bottom: -1px;
}
.sheet-name {
    width: 23px;
    font-family: "Liberation Mono", monospace;
    font-size: 13px;
    color: #222;
    line-height: 16px;
    background-color: #fff;
}
.new-sheet {
    display: flex;
    width: 1022px;
    height: 16px;
    padding-left: 1px;
}
.split {
    width: 6px;
    height: 15px;
    flex: none;
    background-color: #f4f5f7;
    border: 1px solid #8a8f96;
}
.scroll-left {
    width: 0;
    height: 0;
    margin: 0 5px 0 7px;
    border-top: 4px solid transparent;
    border-bottom: 4px solid transparent;
    border-right: 5px solid #444;
    flex: none;
}
.scroll-thumb {
    flex: 1;
    height: 15px;
    padding-left: 20px;
    background: linear-gradient(#f6f7f9, #dfe3e9);
    border: 1px solid #b6bcc4;
    border-radius: 3px 0 0 3px;
    text-align: center;
    font-family: "Liberation Sans", sans-serif;
    font-size: 9px;
    line-height: 13px;
    color: #777;
}
.status {
    height: 23px;
    flex: none;
    display: flex;
    align-items: center;
    padding-left: 1582px;
    background: linear-gradient(#e6e7ea, #b4b6bb);
}
.view {
    display: flex;
    align-items: center;
    justify-content: center;
    width: 19px;
    height: 19px;
    flex: none;
}
.view-on {
    background-color: #fbe08c;
    border: 1px solid #dcb758;
    border-radius: 2px;
}
.zoom-text {
    width: 48px;
    padding-left: 9px;
    flex: none;
    font-family: "Liberation Sans", sans-serif;
    font-size: 13px;
    color: #4c5562;
}
.zoom-minus {
    display: flex;
    align-items: center;
    justify-content: center;
    width: 16px;
    height: 16px;
    flex: none;
    margin-left: 1px;
    border: 1px solid #8d939b;
    border-radius: 50%;
    background-color: #edeff2;
}
.zoom-minus i {
    width: 8px;
    height: 2px;
    background-color: #555;
}
.zoom-track {
    flex: 1;
    height: 1px;
    background-color: #8d939b;
}
.taskbar {
    height: 40px;
    flex: none;
    display: flex;
    align-items: center;
    background-color: #202020;
    color: #eee;
    font-size: 12.500px;
}
.slot {
    display: flex;
    align-items: center;
    justify-content: center;
    width: 45px;
    height: 40px;
    flex: none;
}
.slot.w46 { width: 46px; }
.slot.w48 { width: 48px; }
.slot-run {
    display: flex;
    margin-left: 4.500px;
}
.slot-run2 {
    margin-left: 5.500px;
}
.search-ring {
    width: 15px;
    height: 15px;
    border: 2.500px solid #eee;
    border-radius: 50%;
}
.epic {
    flex-direction: column;
    font-family: "Liberation Sans", sans-serif;
    color: #eee;
    line-height: 1;
    background: linear-gradient(#0c0c0c, #0c0c0c) center / 21px 27px no-repeat;
}
.epic-big {
    font-size: 11px;
    font-weight: bold;
    transform: scaleY(1.300);
}
.epic-small {
    font-size: 4.500px;
    margin-top: 4px;
}
.pinwheel {
    width: 24px;
    height: 24px;
    border-radius: 50%;
    background:
        radial-gradient(circle, #fff 0 2px, transparent 3px),
        conic-gradient(#f4b400 0 60deg, #e8453c 60deg 120deg, #b04ad0 120deg 180deg, #3f7fe0 180deg 240deg, #2fb8d8 240deg 300deg, #4fbf5a 300deg 360deg);
}
.run-item {
    display: flex;
    align-items: center;
    height: 40px;
    flex: none;
    position: relative;
    white-space: nowrap;
}
.run-item::after {
    content: "";
    position: absolute;
    left: 0;
    right: 0;
    bottom: 0;
    height: 2px;
    background-color: #9a9a9a;
}
.run-label {
    color: #eee;
}
.run-folder {
    width: 108px;
    margin-left: 4.500px;
    gap: 16px;
    padding-left: 3px;
}
.run-bili {
    width: 107px;
    margin-left: 3.500px;
    padding-left: 3px;
    gap: 5px;
}
.run-excel {
    width: 116px;
    margin-left: 6px;
    padding-left: 8px;
    gap: 6px;
    background-color: #333;
    font-size: 13px;
}
.tray {
    display: flex;
    align-items: center;
    margin-left: 3px;
}
.tray-slot {
    display: flex;
    align-items: center;
    justify-content: center;
    width: 24px;
    flex: none;
}
.tray-wide {
    display: flex;
    align-items: center;
    justify-content: center;
    flex: none;
}
.tray-wide.w22 {
    margin-left: 4px;
}
.en {
    margin-left: 6px;
    font-family: "Liberation Sans", sans-serif;
    font-size: 13px;
}
```
